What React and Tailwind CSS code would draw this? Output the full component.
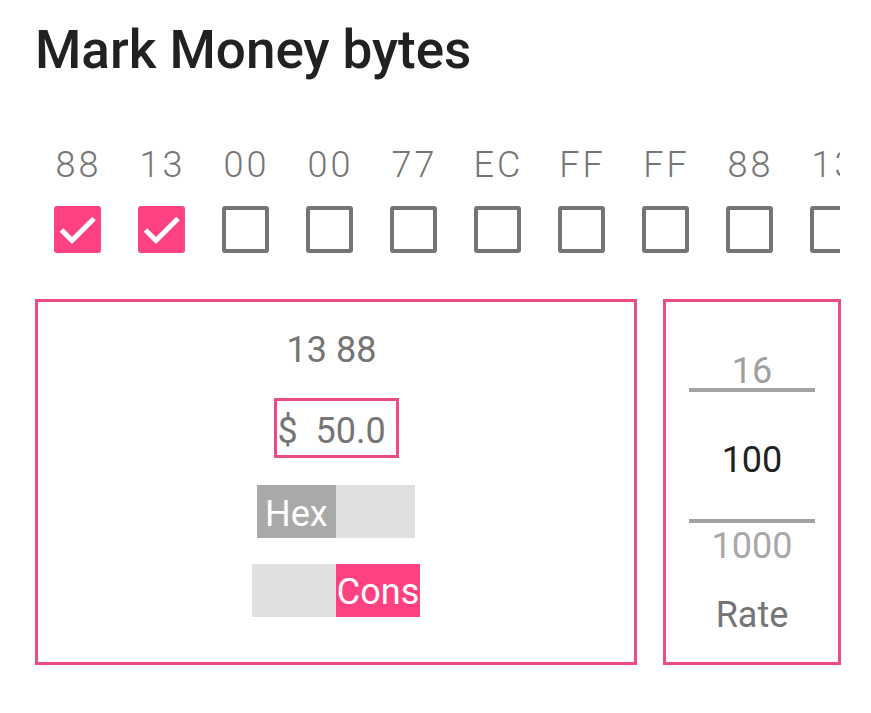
import React, { useState } from 'react';

const BYTES = ['88', '13', '00', '00', '77', 'EC', 'FF', 'FF', '88', '13'];

const CheckBox = ({ checked, onClick }) => (
    checked ? (
        <button onClick={onClick} className="w-[47px] h-[47px] rounded-[3px] bg-[#ff4081] flex items-center justify-center">
            <svg width="47" height="47" viewBox="0 0 47 47">
                <path d="M7.5 24 L18 34.5 L40 12.5" fill="none" stroke="#fff" strokeWidth="5" />
            </svg>
        </button>
    ) : (
        <button onClick={onClick} className="w-[47px] h-[47px] rounded-[3px] border-[4.5px] border-[#757575]" />
    )
);

const App = () => {
    const [marked, setMarked] = useState([true, true, false, false, false, false, false, false, false, false]);

    const toggle = i => setMarked(m => m.map((v, j) => (j === i ? !v : v)));

    return (
        <div className="min-h-screen bg-white font-['Roboto',sans-serif] pl-[35px] pt-[24px]">
            <h1 className="text-[53px] leading-none font-medium text-[#212121]">Mark Money bytes</h1>

            {/* byte row */}
            <div className="mt-[66px] w-[805px] overflow-hidden flex">
                {BYTES.map((b, i) => (
                    <div key={i} className="w-[84px] shrink-0 flex flex-col items-center">
                        <span className="h-[40px] text-[36px] leading-[44px] font-light tracking-[3px] pl-[3px] text-[#757575]">{b}</span>
                        <div className="mt-[23px]">
                            <CheckBox checked={marked[i]} onClick={() => toggle(i)} />
                        </div>
                    </div>
                ))}
            </div>

            <div className="mt-[43px] flex gap-[26px]">
                {/* value panel */}
                <div className="w-[602px] h-[366px] border-[3px] border-[#e94b87] flex flex-col items-center">
                    <span className="mt-[30px] text-[36px] leading-none text-[#757575] whitespace-pre">13 88 </span>
                    <div className="mt-[30px] w-[125px] h-[60px] border-[3px] border-[#e94b87] pt-[12px] pl-[1px]">
                        <span className="block text-[36px] leading-none text-[#757575] whitespace-pre">$  50.0</span>
                    </div>
                    <div className="mt-[27px] w-[158px] h-[53px] bg-[#e0e0e0] flex">
                        <div className="w-[79px] h-full bg-[#a9a9a9] pl-[8px] pt-[11px] text-[36px] leading-none text-white">Hex</div>
                    </div>
                    <div className="mt-[26px] w-[168px] h-[53px] bg-[#e0e0e0] flex justify-end">
                        <div className="w-[84px] h-full bg-[#ff4081] pt-[10px] text-center text-[36px] leading-none text-white">Cons</div>
                    </div>
                </div>

                {/* rate picker */}
                <div className="w-[178px] h-[366px] border-[3px] border-[#e94b87] flex flex-col items-center">
                    <span className="mt-[51px] text-[36px] leading-none text-[#a0a0a0]">16</span>
                    <div className="-mt-[1px] w-[126px] h-[4px] bg-[#a3a3a3]" />
                    <span className="mt-[50px] text-[36px] leading-none text-[#212121]">100</span>
                    <div className="mt-[41px] w-[126px] h-[4px] bg-[#a3a3a3]" />
                    <span className="mt-[5px] text-[36px] leading-none text-[#a8a8a8]">1000</span>
                    <span className="mt-[33px] text-[36px] leading-none text-[#757575]">Rate</span>
                </div>
            </div>
        </div>
    );
};

export default App;
